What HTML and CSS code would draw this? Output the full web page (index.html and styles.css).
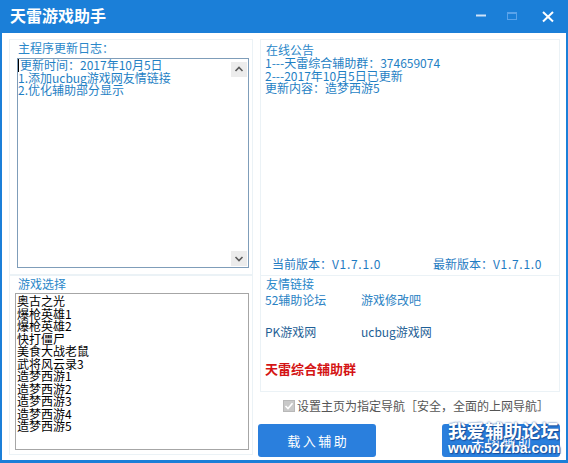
FILE: index.html
```html
<!DOCTYPE html>
<html lang="zh-CN">
<head>
<meta charset="utf-8">
<title>天雷游戏助手</title>
<link rel="stylesheet" href="styles.css">
</head>
<body>
<div class="window">
  <div class="titlebar">
    <div class="title">天雷游戏助手</div>
    <svg class="controls" width="98" height="33" viewBox="0 0 98 33">
      <line x1="6" y1="15.5" x2="16" y2="15.5" stroke="#cfe3f8" stroke-width="2"/>
      <rect x="37.5" y="12.5" width="9" height="7" fill="none" stroke="#5ba3ea" stroke-width="1"/>
      <line x1="37.5" y1="13" x2="46.5" y2="13" stroke="#5ba3ea" stroke-width="2"/>
      <line x1="73" y1="12" x2="83" y2="21.5" stroke="#ffffff" stroke-width="2"/>
      <line x1="83" y1="12" x2="73" y2="21.5" stroke="#ffffff" stroke-width="2"/>
    </svg>
  </div>
  <div class="body">
    <div class="left">
      <div class="group g-log">
        <div class="label">主程序更新日志：</div>
        <div class="textbox">
          <div class="tb-text">
            <div><span class="caret"></span>更新时间：2017年10月5日</div>
            <div>1.添加ucbug游戏网友情链接</div>
            <div>2.优化辅助部分显示</div>
          </div>
          <div class="scroll">
            <div class="sbtn"><svg width="16" height="15" viewBox="0 0 16 15"><polyline points="4.5,9 8,5.5 11.5,9" fill="none" stroke="#5a5a5a" stroke-width="1.6"/></svg></div>
            <div class="sbtn"><svg width="16" height="15" viewBox="0 0 16 15"><polyline points="4.5,6 8,9.5 11.5,6" fill="none" stroke="#5a5a5a" stroke-width="1.6"/></svg></div>
          </div>
        </div>
      </div>
      <div class="group g-games">
        <div class="label">游戏选择</div>
        <div class="listbox">
          <div>奥古之光</div>
          <div>爆枪英雄1</div>
          <div>爆枪英雄2</div>
          <div>快打僵尸</div>
          <div>美食大战老鼠</div>
          <div>武将风云录3</div>
          <div>造梦西游1</div>
          <div>造梦西游2</div>
          <div>造梦西游3</div>
          <div>造梦西游4</div>
          <div>造梦西游5</div>
        </div>
      </div>
    </div>
    <div class="right">
      <div class="group g-notice">
        <div class="label label-r">在线公告</div>
        <div class="notice-lines">
          <div>1---天雷综合辅助群：374659074</div>
          <div>2---2017年10月5日已更新</div>
          <div>更新内容：造梦西游5</div>
        </div>
        <div class="versions">
          <span class="ver-cur">当前版本：<span class="vnum">V1.7.1.0</span></span>
          <span>最新版本：<span class="vnum">V1.7.1.0</span></span>
        </div>
      </div>
      <div class="group g-links">
        <div class="label label-r">友情链接</div>
        <div class="links">
          <span class="lnk">52辅助论坛</span>
          <span class="lnk">游戏修改吧</span>
          <span class="lnk dark">PK游戏网</span>
          <span class="lnk dark">ucbug游戏网</span>
        </div>
        <div class="red">天雷综合辅助群</div>
      </div>
      <div class="check-row">
        <svg class="cb" width="12" height="12" viewBox="0 0 12 12">
          <rect x="0.5" y="0.5" width="11" height="11" fill="#c9c9c9" stroke="#b8b8b8"/>
          <polyline points="2.5,6 5,8.5 9.5,3.2" fill="none" stroke="#ffffff" stroke-width="1.6"/>
        </svg>
        <span>设置主页为指定导航［安全，全面的上网导航］</span>
      </div>
      <div class="btn-row">
        <div class="btn">载入辅助</div>
        <div class="btn btn-close">关闭辅助
          <div class="wm">
            <div class="wm1">我爱辅助论坛</div>
            <div class="wm2">www.52fzba.com</div>
          </div>
        </div>
      </div>
    </div>
  </div>
</div>
</body>
</html>
```

FILE: styles.css
```css
html, body {
  margin: 0;
  padding: 0;
}
body {
  width: 568px;
  height: 463px;
  overflow: hidden;
  font-family: "Noto Sans CJK SC", sans-serif;
  font-size: 12px;
  background: #ffffff;
}
.window {
  width: 568px;
  height: 463px;
  display: flex;
  flex-direction: column;
  background: #ffffff;
}
.titlebar {
  height: 33px;
  flex: none;
  background: #1b7fd8;
  display: flex;
  align-items: flex-start;
  justify-content: space-between;
}
.title {
  color: #ffffff;
  font-weight: bold;
  font-size: 16px;
  line-height: 30px;
  padding-left: 10px;
}
.controls {
  display: block;
}
.body {
  flex: 1;
  display: flex;
  border-style: solid;
  border-color: #1b7fd8;
  border-width: 0 2px 3px 2px;
  min-height: 0;
}
.left {
  width: 254px;
  flex: none;
}
.right {
  flex: 1;
}
.group {
  border: 1px solid #ebf2f6;
  box-sizing: border-box;
}
.label {
  line-height: 15px;
  color: #2a87c9;
  padding-left: 8px;
}
.label-r {
  padding-left: 5px;
}
.g-log {
  margin: 6px 0 0 7px;
  width: 244px;
  height: 236px;
}
.textbox {
  margin: 3px 0 0 7px;
  width: 232px;
  height: 210px;
  box-sizing: border-box;
  border: 1px solid #7f9db9;
  display: flex;
}
.tb-text {
  flex: 1;
  color: #1f7fc4;
  line-height: 12.2px;
  padding-top: 0;
}
.caret {
  display: inline-block;
  width: 1px;
  height: 13px;
  background: #000000;
  vertical-align: -2px;
  margin-right: 1px;
}
.scroll {
  width: 16px;
  margin-right: 1px;
  padding: 3px 0 1px;
  display: flex;
  flex-direction: column;
  justify-content: space-between;
}
.sbtn {
  width: 16px;
  height: 15px;
  background: #ececec;
}
.sbtn svg {
  display: block;
}
.g-games {
  margin-left: 7px;
  width: 244px;
  height: 180px;
}
.listbox {
  margin: 2px 0 0 5px;
  width: 234px;
  height: 157px;
  box-sizing: border-box;
  border: 1px solid #a6a6a6;
  padding: 1px 0 0 1px;
  line-height: 12.5px;
  color: #000000;
}
.g-notice {
  margin: 6px 0 0 4px;
  width: 300px;
  height: 237px;
  display: flex;
  flex-direction: column;
}
.g-notice .label {
  padding-top: 2px;
}
.notice-lines {
  padding-left: 4px;
  line-height: 12.5px;
  color: #1f7fc4;
}
.versions {
  margin-top: auto;
  padding: 0 0 4px 11px;
  display: flex;
  line-height: 15px;
  color: #1f7bc2;
}
.ver-cur {
  width: 161px;
}
.vnum {
  letter-spacing: 0.7px;
}
.g-links {
  margin: -1px 0 0 4px;
  width: 300px;
  height: 117px;
}
.links {
  margin-top: 2px;
  padding-left: 4px;
  display: grid;
  grid-template-columns: 96px auto;
  row-gap: 18px;
  line-height: 14px;
}
.lnk {
  color: #2a82c4;
}
.lnk.dark {
  color: #1f5f96;
}
.red {
  margin-top: 22px;
  padding-left: 4px;
  color: #d41414;
  font-weight: bold;
  font-size: 13px;
  line-height: 16px;
}
.check-row {
  margin-top: 7px;
  padding-left: 27px;
  display: flex;
  align-items: center;
  line-height: 14px;
  color: #555555;
}
.cb {
  display: block;
  margin-right: 2px;
}
.btn-row {
  margin-top: 11px;
  padding-left: 2px;
  display: flex;
  gap: 66px;
}
.btn {
  width: 118px;
  height: 33px;
  border-radius: 3px;
  background: #2a7fdd;
  color: #ffffff;
  font-size: 13px;
  letter-spacing: 2.5px;
  padding-left: 2.5px;
  box-sizing: border-box;
  display: flex;
  align-items: center;
  justify-content: center;
}
.btn-close {
  position: relative;
}
.wm {
  position: absolute;
  left: 6px;
  top: -3px;
  letter-spacing: 0;
  color: #ffffff;
  text-shadow: 1px 1px 1px #1a4f9c, 0 0 2px #1a4f9c;
  white-space: nowrap;
}
.wm1 {
  font-family: "Noto Sans CJK SC", sans-serif;
  font-weight: bold;
  font-size: 18.5px;
  line-height: 19px;
}
.wm2 {
  margin-top: 0.5px;
  font-family: "Liberation Sans", Arial, sans-serif;
  font-weight: bold;
  font-size: 14px;
  line-height: 15px;
}
```
